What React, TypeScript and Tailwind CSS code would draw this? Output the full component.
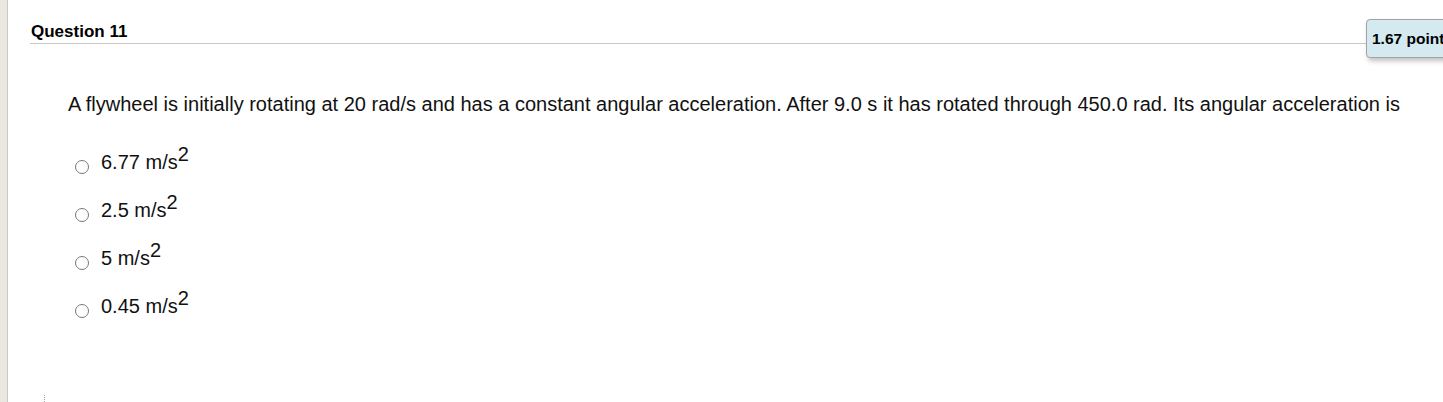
import type { FC } from "react";

const options = ["6.77", "2.5", "5", "0.45"];

const AnswerOption: FC<{ value: string }> = ({ value }) => (
  <label className="flex items-start gap-[12px]">
    <span className="mt-[10px] h-[14px] w-[14px] shrink-0 rounded-full border border-[#777] bg-white" />
    <span className="text-[20px] leading-[24px] text-[#111]">
      {value} m/s
      <sup className="static align-[8px] text-[20px]">2</sup>
    </span>
  </label>
);

export default function App() {
  return (
    <div className="flex h-[402px] w-full overflow-hidden bg-white font-['Arial','Liberation_Sans',sans-serif] text-black">
      <div className="w-[8px] shrink-0 border-r border-[#cdc9c1] bg-[#ebe8e2]" />

      <div className="relative flex-1 pl-[22px]">
        <div className="border-b border-[#c9c9c9] pb-[1px] pt-[22px]">
          <h2 className="pl-[1px] text-[17px] font-bold leading-[20px]">
            Question 11
          </h2>
        </div>

        <div className="absolute left-[1358px] top-[19px] flex h-[39px] items-center whitespace-nowrap rounded-[4px] border border-[#a3a3a3] bg-[#d5e9f0] px-[5px] text-[15.5px] font-bold shadow-[2px_3px_5px_rgba(0,0,0,0.25)]">
          1.67 points
        </div>

        <p className="ml-[38px] mt-[48px] text-[20px] leading-[24px] text-[#111]">
          A flywheel is initially rotating at 20 rad/s and has a constant
          angular acceleration. After 9.0 s it has rotated through 450.0 rad.
          Its angular acceleration is
        </p>

        <div className="ml-[45px] mt-[34px] flex flex-col gap-[24px]">
          {options.map((value) => (
            <AnswerOption key={value} value={value} />
          ))}
        </div>

        <div className="absolute bottom-0 left-[36px] h-[7px] border-l border-dotted border-[#9a9a9a]" />
      </div>
    </div>
  );
}
